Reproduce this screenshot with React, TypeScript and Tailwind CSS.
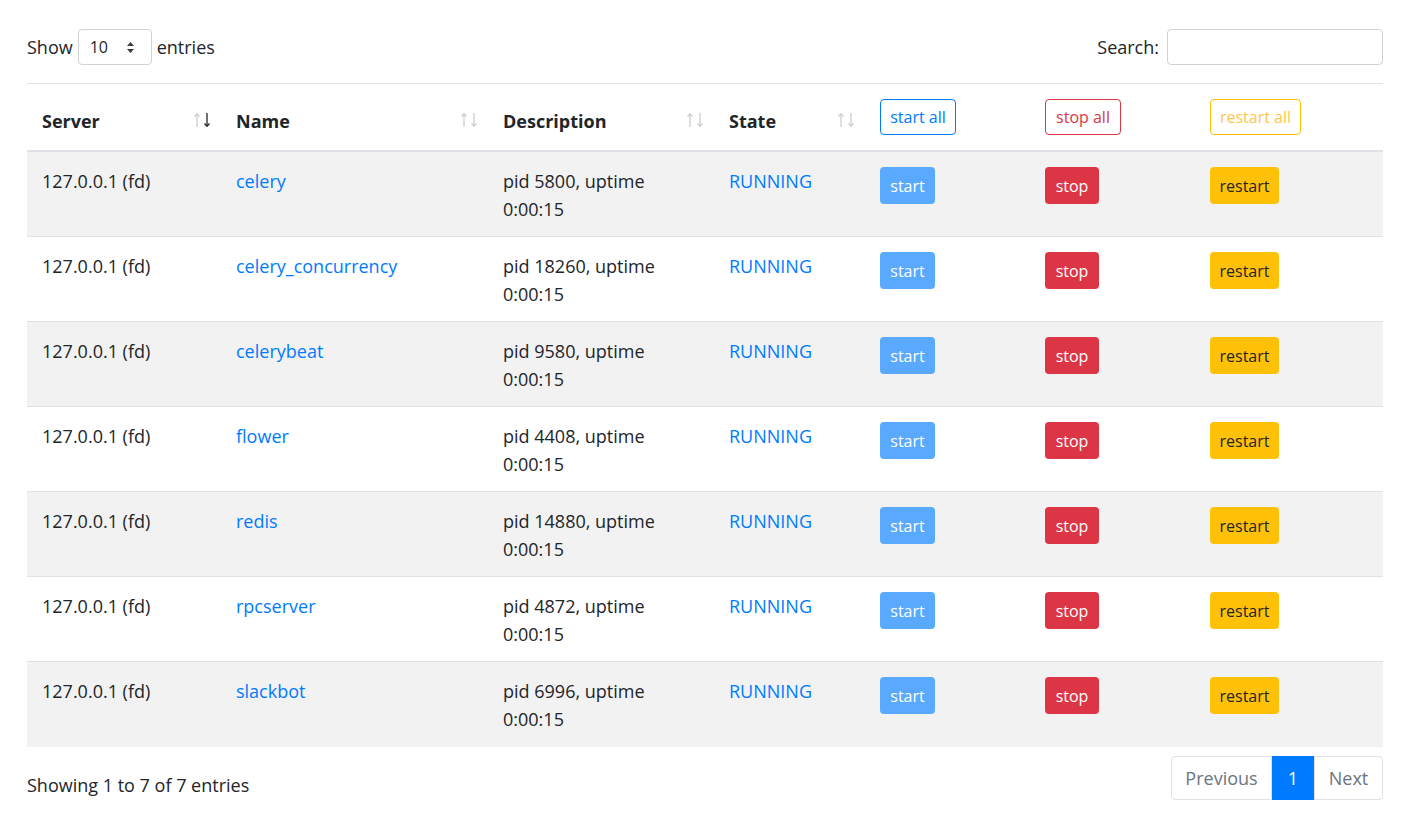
import React from 'react';

type Proc = { name: string; pid: number };

const procs: Proc[] = [
  { name: 'celery', pid: 5800 },
  { name: 'celery_concurrency', pid: 18260 },
  { name: 'celerybeat', pid: 9580 },
  { name: 'flower', pid: 4408 },
  { name: 'redis', pid: 14880 },
  { name: 'rpcserver', pid: 4872 },
  { name: 'slackbot', pid: 6996 },
];

function SortIcon({ active }: { active?: boolean }) {
  return (
    <svg
      className="absolute right-[10px] bottom-[22px]"
      width="18"
      height="16"
      viewBox="0 0 18 16"
      fill="none"
      strokeWidth="1.3"
    >
      <g stroke="#212529" opacity="0.22">
        <path d="M4 2 V15" />
        <path d="M1.5 4.5 L4 1.8 L6.5 4.5" />
      </g>
      <g stroke="#212529" opacity={active ? 1 : 0.22}>
        <path d="M14 1 V14" />
        <path d="M11.5 11.5 L14 14.2 L16.5 11.5" />
      </g>
    </svg>
  );
}

function Th({ label, active }: { label: string; active?: boolean }) {
  return (
    <th className="relative pl-[15px] pr-[30px] pt-[15px] pb-[15px] text-left align-bottom font-bold">
      {label}
      <SortIcon active={active} />
    </th>
  );
}

const td = 'px-[15px] pt-[15px] pb-[13px] align-top';

export default function App() {
  return (
    <div
      className="min-h-screen bg-white pl-[27px] pr-[24px] pt-[29px] text-[18px] leading-[28px] text-[#212529]"
      style={{ fontFamily: '"Open Sans", "Noto Sans", sans-serif' }}
    >
      {/* Top controls */}
      <div className="flex h-[36px] items-center justify-between">
        <div className="flex items-center">
          <span>Show</span>
          <div className="mx-[5px] flex h-[36px] w-[74px] items-center justify-between rounded-[4px] border border-[#ced4da] pl-[11px] pr-[16px] text-[16px]">
            <span>10</span>
            <svg width="9" height="13" viewBox="0 0 9 13">
              <path d="M4.5 1 L8 5 L1 5 Z" fill="#343a40" />
              <path d="M4.5 12 L8 8 L1 8 Z" fill="#343a40" />
            </svg>
          </div>
          <span>entries</span>
        </div>
        <div className="flex items-center">
          <span className="mr-[8px]">Search:</span>
          <input className="h-[36px] w-[216px] rounded-[4px] border border-[#ced4da] outline-none" />
        </div>
      </div>

      {/* Table */}
      <table className="mt-[18px] w-full table-fixed border-collapse">
        <colgroup>
          <col className="w-[194px]" />
          <col className="w-[267px]" />
          <col className="w-[226px]" />
          <col className="w-[151px]" />
          <col className="w-[165px]" />
          <col className="w-[165px]" />
          <col />
        </colgroup>
        <thead>
          <tr className="border-t border-b-2 border-t-[#dee2e6] border-b-[#dee2e6]">
            <Th label="Server" active />
            <Th label="Name" />
            <Th label="Description" />
            <Th label="State" />
            <th className="px-[15px] pt-[15px] pb-[15px] text-left align-bottom font-normal">
              <button className="h-[36px] w-[76px] rounded-[4px] border border-[#007bff] text-[16px] text-[#007bff]">
                start all
              </button>
            </th>
            <th className="px-[15px] pt-[15px] pb-[15px] text-left align-bottom font-normal">
              <button className="h-[36px] w-[76px] rounded-[4px] border border-[#dc3545] text-[16px] text-[#dc3545]">
                stop all
              </button>
            </th>
            <th className="px-[15px] pt-[15px] pb-[15px] text-left align-bottom font-normal">
              <button className="h-[36px] w-[91px] rounded-[4px] border border-[#ffc107] text-[16px] text-[#ffc84a]">
                restart all
              </button>
            </th>
          </tr>
        </thead>
        <tbody>
          {procs.map((p, i) => (
            <tr
              key={p.name}
              className={`border-t border-[#dee2e6] first:border-t-0 ${i % 2 === 0 ? 'bg-[#f2f2f2]' : 'bg-white'}`}
            >
              <td className={`h-[85px] ${td}`}>127.0.0.1 (fd)</td>
              <td className={td}>
                <a className="text-[#007bff]" href="#">
                  {p.name}
                </a>
              </td>
              <td className={td}>
                <div>pid {p.pid}, uptime</div>
                <div>0:00:15</div>
              </td>
              <td className={`${td} text-[#007bff]`}>RUNNING</td>
              <td className={td}>
                <button className="h-[37px] w-[55px] rounded-[4px] bg-[#59a9ff] text-[16px] text-white">start</button>
              </td>
              <td className={td}>
                <button className="h-[37px] w-[54px] rounded-[4px] bg-[#dc3545] text-[16px] text-white">stop</button>
              </td>
              <td className={td}>
                <button className="h-[37px] w-[69px] rounded-[4px] bg-[#ffc107] text-[16px] text-[#212529]">
                  restart
                </button>
              </td>
            </tr>
          ))}
        </tbody>
      </table>

      {/* Footer */}
      <div className="mt-[9px] flex items-start justify-between">
        <div className="pt-[15px]">Showing 1 to 7 of 7 entries</div>
        <div className="flex h-[44px]">
          <span className="flex w-[101px] items-center justify-center rounded-l-[4px] border border-[#dee2e6] text-[#6c757d]">
            Previous
          </span>
          <span className="flex w-[42px] items-center justify-center bg-[#007bff] text-white">1</span>
          <span className="flex w-[69px] items-center justify-center rounded-r-[4px] border border-[#dee2e6] text-[#6c757d]">
            Next
          </span>
        </div>
      </div>
    </div>
  );
}
